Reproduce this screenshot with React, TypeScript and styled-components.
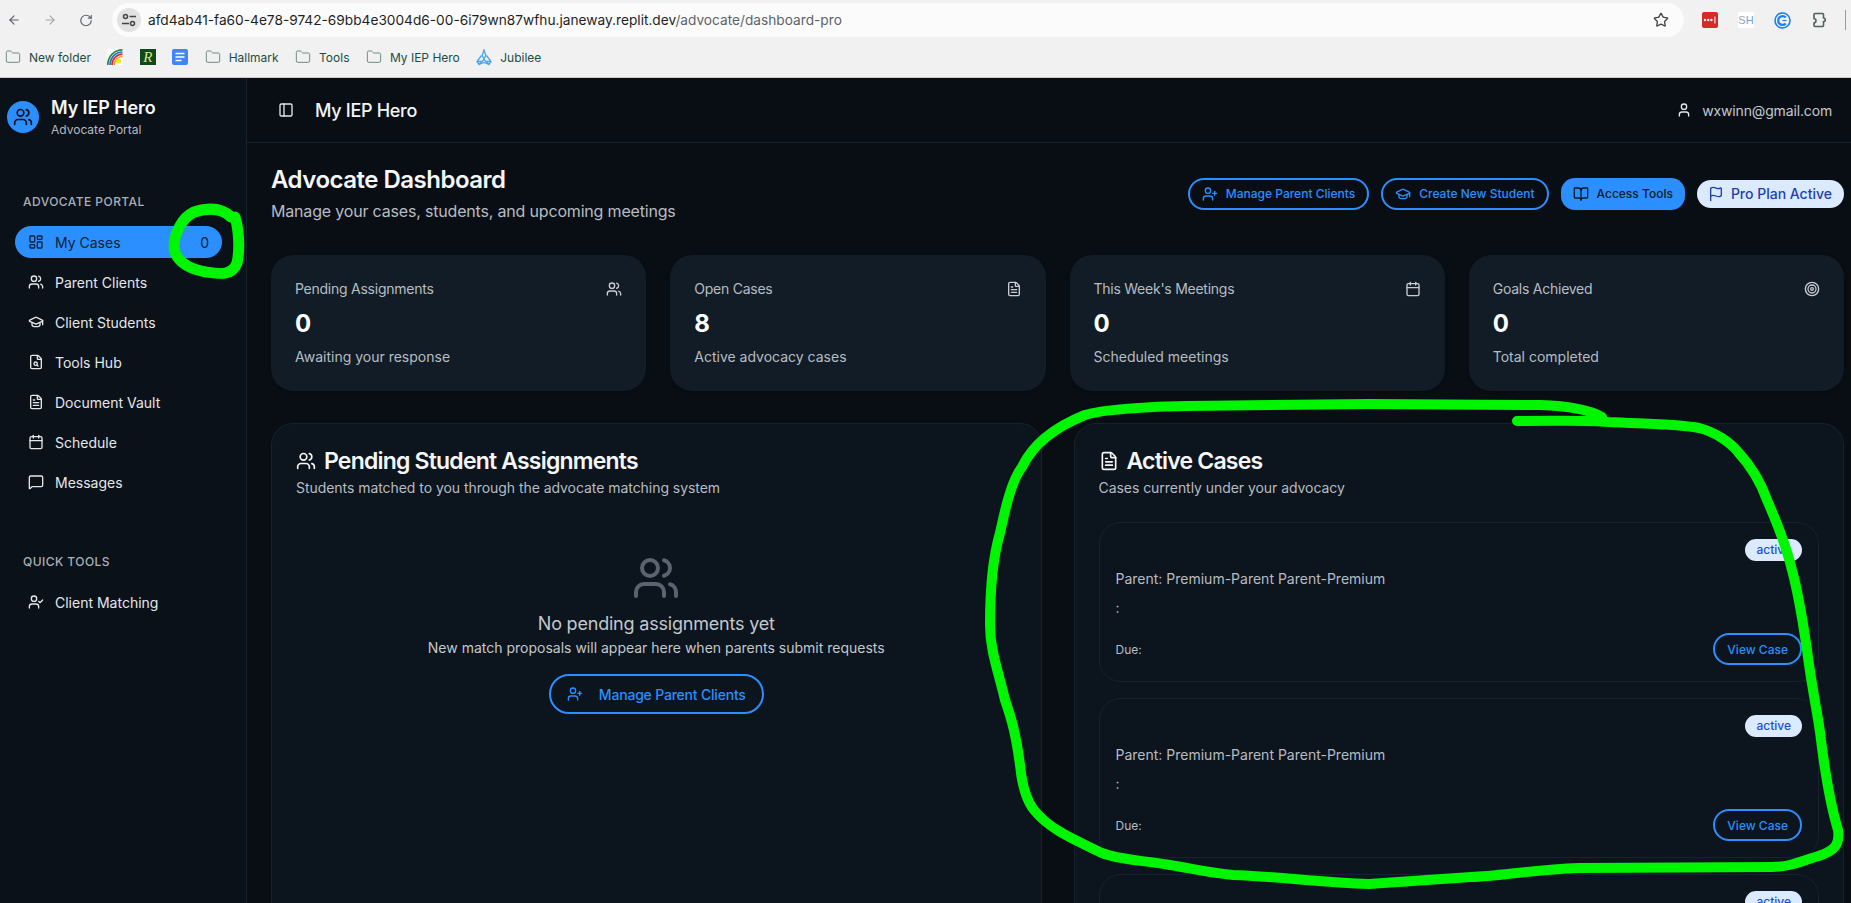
import React from "react";
import styled, { createGlobalStyle } from "styled-components";
import {
  ArrowLeft, ArrowRight, BookOpen, Calendar, FileSearch, FileText, Flag, Folder, GraduationCap,
  LayoutDashboard, MessageSquare, PanelLeft, RotateCw, Star, Target,
  User, UserCheck, UserPlus, Users,
} from "lucide-react";

const Global = createGlobalStyle`
  html, body { margin: 0; padding: 0; height: 100%; overflow: hidden; background: #090e15; }
  * { box-sizing: border-box; }
  body { font-family: "Inter", "Liberation Sans", sans-serif; }
`;

const Page = styled.div`
  position: relative;
  width: 1851px;
  height: 903px;
  overflow: hidden;
  display: flex;
  flex-direction: column;
`;

const Toolbar = styled.div`
  height: 40px;
  background: #f1f1f1;
  display: flex;
  align-items: center;
  padding: 0 5px 0 7px;
  color: #5f6368;
`;
const NavButton = styled.span<{ $dim?: boolean; $gap: number }>`
  display: flex;
  width: 14px;
  margin-right: ${(p) => p.$gap}px;
  color: ${(p) => (p.$dim ? "#a6a8ab" : "#5f6368")};
`;
const UrlPill = styled.div`
  width: 1574px;
  height: 34px;
  margin-left: 19px;
  border-radius: 17px;
  background: #fbfbfb;
  display: flex;
  align-items: center;
  padding: 0 15px 0 5px;
`;
const SiteInfo = styled.span`
  width: 24px;
  height: 24px;
  border-radius: 50%;
  background: #e2e2e2;
  color: #444;
  display: flex;
  align-items: center;
  justify-content: center;
  margin-right: 7px;
`;
const UrlText = styled.span`
  font: 400 13.7px "Inter", sans-serif;
  color: #1f1f1f;
  flex: 1;
  white-space: nowrap;
`;
const UrlMuted = styled.span`
  color: #5f6368;
`;
const Extensions = styled.div`
  display: flex;
  align-items: center;
  margin-left: 18px;
  gap: 20px;
`;
const ExtSh = styled.span`
  width: 16px;
  height: 16px;
  background: #fff;
  color: #9aa3ad;
  display: flex;
  align-items: center;
  justify-content: center;
  font: 400 11px "Liberation Sans", sans-serif;
`;
const ExtShAccent = styled.span`
  color: #6f9fd8;
`;
const ExtDivider = styled.span`
  width: 1px;
  height: 20px;
  margin-left: -2px;
  background: #7fa7ad;
`;

const BookmarksBar = styled.div`
  height: 38px;
  background: #f1f1f1;
  border-bottom: 1px solid #c9c9c9;
  display: flex;
  align-items: center;
  padding: 0 0 3px 5px;
  gap: 16.4px;
`;
const Bookmark = styled.span`
  display: flex;
  align-items: center;
  gap: 8px;
  font: 400 12px "Inter", sans-serif;
  color: #1d4d45;
  svg { flex: none; }
`;
const FolderIcon = styled(Folder)`
  color: #6f8c86;
`;
const RBadge = styled.span`
  width: 16px;
  height: 16px;
  background: #0e4a1c;
  color: #dfe08a;
  display: flex;
  align-items: center;
  justify-content: center;
  font: italic 400 15px "Liberation Serif", serif;
`;

const Body = styled.div`
  flex: 1;
  min-height: 0;
  display: flex;
  background: #090e15;
  color: #fff;
`;
const Sidebar = styled.aside`
  width: 247px;
  flex: none;
  background: #0b1119;
  border-right: 1px solid #16232f;
  padding: 18px 24px 0 15px;
`;
const Brand = styled.div`
  display: flex;
  align-items: center;
  gap: 12px;
  margin-left: -8px;
`;
const BrandAvatar = styled.span`
  width: 32px;
  height: 32px;
  border-radius: 50%;
  background: #2b8fff;
  color: #0b1119;
  display: flex;
  align-items: center;
  justify-content: center;
`;
const BrandTitle = styled.div`
  font-size: 18px;
  line-height: 24px;
  font-weight: 600;
  letter-spacing: -0.1px;
  color: #f3f5f7;
`;
const BrandSub = styled.div`
  font-size: 12px;
  line-height: 16px;
  margin: 2px 0 -1px;
  color: #b3b9c0;
`;
const SectionLabel = styled.div<{ $top: number }>`
  margin: ${(p) => p.$top}px 0 16px 8px;
  font-size: 12px;
  line-height: 16px;
  font-weight: 500;
  letter-spacing: 0.45px;
  color: #a9b0b8;
`;
const NavList = styled.nav`
  display: flex;
  flex-direction: column;
  gap: 8px;
`;
const NavItem = styled.div<{ $active?: boolean }>`
  height: 32px;
  border-radius: 16px;
  display: flex;
  align-items: center;
  gap: 11px;
  padding: 0 13px;
  font-size: 14px;
  color: ${(p) => (p.$active ? "#0d2036" : "#e4e7ea")};
  background: ${(p) => (p.$active ? "#2b8fff" : "transparent")};
`;
const NavCount = styled.span`
  margin-left: auto;
`;

const Main = styled.div`
  flex: 1;
  min-width: 0;
  display: flex;
  flex-direction: column;
`;
const TopBar = styled.header`
  height: 65px;
  flex: none;
  border-bottom: 1px solid #16232f;
  display: flex;
  align-items: center;
  padding: 0 19px 0 31px;
`;
const TopTitle = styled.span`
  margin-left: 21px;
  font-size: 18px;
  font-weight: 500;
  letter-spacing: -0.3px;
  color: #f3f5f7;
`;
const TopUser = styled.span`
  margin-left: auto;
  display: flex;
  align-items: center;
  gap: 10px;
  font-size: 14px;
  letter-spacing: -0.15px;
  color: #c3c8cd;
  svg { color: #e4e7ea; }
`;
const Content = styled.main`
  padding: 21px 7px 0 24px;
`;
const HeadRow = styled.div`
  display: flex;
  align-items: center;
  justify-content: space-between;
  margin-bottom: 32px;
`;
const PageTitle = styled.h1`
  margin: 0;
  font-size: 24px;
  line-height: 32px;
  font-weight: 600;
  letter-spacing: -0.5px;
  color: #f5f6f8;
`;
const PageSub = styled.p`
  margin: 3px 0 0;
  font-size: 16px;
  line-height: 24px;
  letter-spacing: -0.18px;
  color: #b7bcc3;
`;
const Actions = styled.div`
  display: flex;
  align-items: center;
  gap: 12px;
`;
const OutlineButton = styled.button<{ $size?: "md" | "lg"; $gap?: number }>`
  height: ${(p) => (p.$size === "lg" ? 40 : 32)}px;
  padding: 0 ${(p) => (p.$size === "lg" ? 16 : 12)}px;
  border: 2px solid #2b8fff;
  border-radius: 20px;
  background: transparent;
  color: #2b8fff;
  display: inline-flex;
  align-items: center;
  gap: ${(p) => p.$gap ?? 8}px;
  font: 500 ${(p) => (p.$size === "lg" ? 14 : 12)}px "Inter", sans-serif;
  letter-spacing: ${(p) => (p.$size === "lg" ? "-0.2px" : "0")};
  white-space: nowrap;
`;
const SolidButton = styled.button`
  height: 32px;
  padding: 0 12px;
  border: none;
  border-radius: 14px;
  background: #2b8fff;
  color: #0b1a2a;
  display: inline-flex;
  align-items: center;
  gap: 8px;
  font: 500 12px "Inter", sans-serif;
`;
const PlanBadge = styled.span`
  height: 28px;
  padding: 0 12px 0 11px;
  border-radius: 14px;
  background: #dbeafe;
  color: #1e40af;
  display: inline-flex;
  align-items: center;
  gap: 7px;
  font-size: 14px;
  font-weight: 500;
  white-space: nowrap;
`;

const StatGrid = styled.section`
  display: grid;
  grid-template-columns: repeat(4, 1fr);
  gap: 24px;
  margin-bottom: 32px;
`;
const StatCard = styled.div`
  height: 136px;
  border-radius: 22px;
  background: #111c27;
  padding: 24px;
  box-shadow: 0 1px 3px rgba(0, 0, 0, 0.3);
`;
const StatTop = styled.div`
  display: flex;
  justify-content: space-between;
  align-items: center;
  font-size: 14px;
  line-height: 20px;
  letter-spacing: -0.25px;
  color: #b7bcc3;
  svg { color: #c9cdd2; }
`;
const StatValue = styled.div`
  margin-top: 9px;
  font-size: 24px;
  line-height: 32px;
  font-weight: 700;
  color: #fff;
`;
const StatNote = styled.div`
  margin-top: 7px;
  font-size: 14px;
  line-height: 20px;
  color: #b7bcc3;
`;

const Panels = styled.section`
  display: grid;
  grid-template-columns: repeat(2, 1fr);
  gap: 32px;
`;
const Panel = styled.div`
  border: 1px solid #16232f;
  border-radius: 22px;
  background: #0c141d;
  padding: 25px 24px 24px;
  height: 700px;
`;
const PanelTitle = styled.h2`
  margin: 0;
  display: flex;
  align-items: center;
  gap: 8px;
  font-size: 23px;
  line-height: 24px;
  font-weight: 600;
  letter-spacing: -0.8px;
  color: #f5f6f8;
`;
const PanelSub = styled.p`
  margin: 5px 0 24px;
  font-size: 14px;
  line-height: 20px;
  letter-spacing: -0.05px;
  color: #b7bcc3;
`;
const Empty = styled.div`
  display: flex;
  flex-direction: column;
  align-items: center;
  padding-top: 32px;
  color: #5b6370;
`;
const EmptyTitle = styled.div`
  margin-top: 10px;
  font-size: 18px;
  line-height: 24px;
  font-weight: 400;
  letter-spacing: -0.2px;
  color: #c3c8cd;
`;
const EmptyText = styled.div`
  margin: 2px 0 16px;
  font-size: 14px;
  line-height: 20px;
  color: #c3c8cd;
`;
const CaseList = styled.div`
  display: flex;
  flex-direction: column;
  gap: 16px;
`;
const CaseCard = styled.article`
  height: 160px;
  border: 1px solid #16232f;
  border-radius: 22px;
  padding: 16px;
  display: flex;
  flex-direction: column;
`;
const CaseBadge = styled.span`
  align-self: flex-end;
  height: 22px;
  padding: 0 11px;
  border-radius: 11px;
  background: #dbeafe;
  color: #1d4ed8;
  font-size: 12px;
  line-height: 22px;
  font-weight: 500;
`;
const CaseLine = styled.div`
  margin-top: 8px;
  font-size: 14px;
  line-height: 20px;
  color: #b7bcc3;
  & + & { margin-top: 9px; }
`;
const CaseFoot = styled.div`
  margin-top: 15px;
  display: flex;
  justify-content: space-between;
  align-items: center;
  font-size: 12px;
  color: #b7bcc3;
`;
const Scribble = styled.svg`
  position: absolute;
  left: 0;
  top: 0;
  pointer-events: none;
`;

const TuneIcon = () => (
  <svg width="16" height="16" viewBox="0 0 16 16" fill="none" stroke="#444" strokeWidth="1.5">
    <circle cx="4.5" cy="4.5" r="2" />
    <path d="M8.5 4.5H15M1 11.5h7" />
    <circle cx="11.5" cy="11.5" r="2" />
  </svg>
);
const PassIcon = () => (
  <svg width="16" height="16" viewBox="0 0 16 16">
    <rect width="16" height="16" rx="2" fill="#d42b27" />
    <g fill="#fff">
      <circle cx="3" cy="8" r="1.2" />
      <circle cx="6.2" cy="8" r="1.2" />
      <circle cx="9.4" cy="8" r="1.2" />
      <rect x="12.4" y="4.5" width="1" height="7" />
    </g>
  </svg>
);
const CircleC = () => (
  <svg width="17" height="17" viewBox="0 0 17 17" fill="none" stroke="#1a7ff0">
    <circle cx="8.5" cy="8.5" r="7.5" strokeWidth="1.6" />
    <path d="M11.7 5.4a4.4 4.4 0 1 0 0 6.2" strokeWidth="2.2" />
    <path d="M8.5 8.5h4" strokeWidth="1.2" />
  </svg>
);
const ExtensionIcon = () => (
  <svg width="16" height="16" viewBox="0 0 16 16" fill="none" stroke="#4d635f" strokeWidth="1.6" strokeLinejoin="round">
    <path d="M4 1.5h7.5a1 1 0 0 1 1 1V6a1.7 1.7 0 0 1 0 3.6v3.9a1 1 0 0 1-1 1H4a1 1 0 0 1-1-1v-2.8a2 2 0 0 0 0-4V2.5a1 1 0 0 1 1-1Z" />
  </svg>
);
const Rainbow = () => (
  <svg width="16" height="16" viewBox="0 0 16 16" fill="none" strokeWidth="1.7">
    <rect width="16" height="16" fill="#fff" />
    <path d="M.8 16C.8 7.5 7 1 15.5.9" stroke="#1c8f3c" />
    <path d="M3 16C3 9 8.5 3 15.5 3" stroke="#2f66d0" />
    <path d="M5 16C5 10.5 9.5 5.2 15.5 5.2" stroke="#e3262b" />
    <path d="M7.2 16c0-4.3 3.6-8.5 8.3-8.5" stroke="#f39a1e" />
    <circle cx="11.5" cy="12" r="2.6" fill="#f6e625" />
  </svg>
);
const Docs = () => (
  <svg width="16" height="16" viewBox="0 0 16 16">
    <rect width="16" height="16" rx="2" fill="#4285f4" />
    <path d="M3.5 4.5h9M3.5 8h9M3.5 11.5h6" stroke="#fff" strokeWidth="1.6" />
  </svg>
);
const Jubilee = () => (
  <svg width="16" height="17" viewBox="0 0 16 17" fill="none" stroke="#4aa5e8" strokeWidth="1.3">
    <path d="M8 1 6.2 6.5 8 10l1.8-3.5L8 1Z" />
    <path d="M5.5 6.5 1 12.5l2 3 5-5M10.5 6.5l4.5 6-2 3-5-5" />
    <path d="M1 12.5h4.5M15 12.5h-4.5M3 15.5l5-2 5 2" />
  </svg>
);

const bigPath =
  "M1517 421 C1560 421 1590 420 1608 422 C1650 424 1680 424 1699 428 C1715 432 1730 442 1738 452 C1750 465 1760 480 1767 500 C1778 525 1786 545 1792 570 C1800 600 1804 630 1807 650 C1812 690 1819 720 1821 740 C1826 780 1832 810 1838 830 C1840 845 1835 852 1812 858 C1795 864 1785 867 1772 867 L1579 868 C1530 870 1500 876 1471 877 L1369 884 C1320 882 1270 876 1233 875 C1205 872 1190 868 1170 865 C1140 860 1120 860 1102 853 C1075 840 1050 830 1034 810 C1026 800 1022 785 1020 765 C1016 735 1012 720 1005 700 C998 670 990 650 990 625 C990 590 992 560 1000 533 C1006 505 1012 480 1022 467 C1035 440 1060 425 1085 415 C1100 410 1150 406 1187 406 L1369 404 L1540 405 C1570 406 1590 410 1602 417";
const ringPath =
  "M231 217 C222 208 210 207 194 212 C182 218 175 232 174 245 C174 258 184 268 206 272 C220 274 232 276 237 263 C240 250 239 230 235 217";

const navItems = [
  { Icon: Users, label: "Parent Clients" },
  { Icon: GraduationCap, label: "Client Students" },
  { Icon: FileSearch, label: "Tools Hub" },
  { Icon: FileText, label: "Document Vault" },
  { Icon: Calendar, label: "Schedule" },
  { Icon: MessageSquare, label: "Messages" },
];
const stats = [
  { label: "Pending Assignments", value: "0", note: "Awaiting your response", Icon: Users },
  { label: "Open Cases", value: "8", note: "Active advocacy cases", Icon: FileText },
  { label: "This Week's Meetings", value: "0", note: "Scheduled meetings", Icon: Calendar },
  { label: "Goals Achieved", value: "0", note: "Total completed", Icon: Target },
];

export default function App() {
  return (
    <Page>
      <Global />
      <Toolbar>
        <NavButton $gap={22}><ArrowLeft size={16} /></NavButton>
        <NavButton $dim $gap={22}><ArrowRight size={16} /></NavButton>
        <NavButton $gap={0}><RotateCw size={15} /></NavButton>
        <UrlPill>
          <SiteInfo><TuneIcon /></SiteInfo>
          <UrlText>
            afd4ab41-fa60-4e78-9742-69bb4e3004d6-00-6i79wn87wfhu.janeway.replit.dev
            <UrlMuted>/advocate/dashboard-pro</UrlMuted>
          </UrlText>
          <Star size={16} color="#444" />
        </UrlPill>
        <Extensions>
          <PassIcon />
          <ExtSh>S<ExtShAccent>H</ExtShAccent></ExtSh>
          <CircleC />
          <ExtensionIcon />
          <ExtDivider />
        </Extensions>
      </Toolbar>
      <BookmarksBar>
        <Bookmark><FolderIcon size={16} strokeWidth={1.5} />New folder</Bookmark>
        <Bookmark><Rainbow /></Bookmark>
        <Bookmark><RBadge>R</RBadge></Bookmark>
        <Bookmark><Docs /></Bookmark>
        <Bookmark><FolderIcon size={16} strokeWidth={1.5} />Hallmark</Bookmark>
        <Bookmark><FolderIcon size={16} strokeWidth={1.5} />Tools</Bookmark>
        <Bookmark><FolderIcon size={16} strokeWidth={1.5} />My IEP Hero</Bookmark>
        <Bookmark><Jubilee />Jubilee</Bookmark>
      </BookmarksBar>
      <Body>
        <Sidebar>
          <Brand>
            <BrandAvatar><Users size={20} /></BrandAvatar>
            <div>
              <BrandTitle>My IEP Hero</BrandTitle>
              <BrandSub>Advocate Portal</BrandSub>
            </div>
          </Brand>
          <SectionLabel $top={57}>ADVOCATE PORTAL</SectionLabel>
          <NavList>
            <NavItem $active>
              <LayoutDashboard size={16} />My Cases<NavCount>0</NavCount>
            </NavItem>
            {navItems.map(({ Icon, label }) => (
              <NavItem key={label}><Icon size={16} />{label}</NavItem>
            ))}
          </NavList>
          <SectionLabel $top={56}>QUICK TOOLS</SectionLabel>
          <NavList>
            <NavItem><UserCheck size={16} />Client Matching</NavItem>
          </NavList>
        </Sidebar>
        <Main>
          <TopBar>
            <PanelLeft size={16} color="#e4e7ea" />
            <TopTitle>My IEP Hero</TopTitle>
            <TopUser><User size={16} />wxwinn@gmail.com</TopUser>
          </TopBar>
          <Content>
            <HeadRow>
              <div>
                <PageTitle>Advocate Dashboard</PageTitle>
                <PageSub>Manage your cases, students, and upcoming meetings</PageSub>
              </div>
              <Actions>
                <OutlineButton><UserPlus size={16} />Manage Parent Clients</OutlineButton>
                <OutlineButton><GraduationCap size={16} />Create New Student</OutlineButton>
                <SolidButton><BookOpen size={16} />Access Tools</SolidButton>
                <PlanBadge><Flag size={16} />Pro Plan Active</PlanBadge>
              </Actions>
            </HeadRow>
            <StatGrid>
              {stats.map(({ label, value, note, Icon }) => (
                <StatCard key={label}>
                  <StatTop>{label}<Icon size={16} /></StatTop>
                  <StatValue>{value}</StatValue>
                  <StatNote>{note}</StatNote>
                </StatCard>
              ))}
            </StatGrid>
            <Panels>
              <Panel>
                <PanelTitle><Users size={20} />Pending Student Assignments</PanelTitle>
                <PanelSub>Students matched to you through the advocate matching system</PanelSub>
                <Empty>
                  <Users size={48} />
                  <EmptyTitle>No pending assignments yet</EmptyTitle>
                  <EmptyText>New match proposals will appear here when parents submit requests</EmptyText>
                  <OutlineButton $size="lg" $gap={16}><UserPlus size={16} />Manage Parent Clients</OutlineButton>
                </Empty>
              </Panel>
              <Panel>
                <PanelTitle><FileText size={20} />Active Cases</PanelTitle>
                <PanelSub>Cases currently under your advocacy</PanelSub>
                <CaseList>
                  {[0, 1, 2].map((i) => (
                    <CaseCard key={i}>
                      <CaseBadge>active</CaseBadge>
                      <CaseLine>Parent: Premium-Parent Parent-Premium</CaseLine>
                      <CaseLine>:</CaseLine>
                      <CaseFoot>
                        Due:
                        <OutlineButton>View Case</OutlineButton>
                      </CaseFoot>
                    </CaseCard>
                  ))}
                </CaseList>
              </Panel>
            </Panels>
          </Content>
        </Main>
      </Body>
      <Scribble width="1851" height="903" viewBox="0 0 1851 903" fill="none" stroke="#00f500" strokeLinecap="round" strokeLinejoin="round">
        <path d={ringPath} strokeWidth="11" />
        <path d={bigPath} strokeWidth="10" />
      </Scribble>
    </Page>
  );
}
